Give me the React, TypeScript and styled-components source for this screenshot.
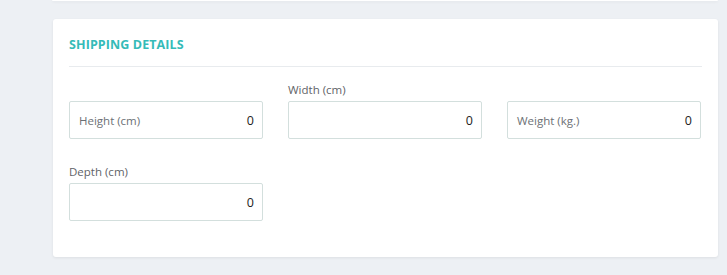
import React from "react";
import styled, { createGlobalStyle } from "styled-components";

const Global = createGlobalStyle`
  html, body { margin: 0; padding: 0; background: #edf0f4; }
  body { font-family: "Open Sans", "Liberation Sans", sans-serif; }
  * { box-sizing: border-box; }
`;

const Page = styled.div`
  display: flex;
  flex-direction: column;
  gap: 18px;
  padding: 0 9px 18px 53px;
  width: 727px;
`;

const TopCard = styled.div`
  height: 1px;
  background: #ffffff;
  border-radius: 0 0 3px 3px;
  box-shadow: 0 1px 3px rgba(0, 0, 0, 0.08);
  margin-left: -1px;
`;

const Card = styled.section`
  background: #ffffff;
  border-radius: 3px;
  box-shadow: 0 1px 3px rgba(0, 0, 0, 0.07);
  padding: 17px 16px 36px 16px;
`;

const Heading = styled.h2`
  margin: 0;
  font-size: 12.5px;
  line-height: 17px;
  font-weight: 700;
  color: #35bbb8;
  letter-spacing: 0.1px;
  text-transform: uppercase;
  padding-bottom: 13px;
  border-bottom: 1px solid #e8ebee;
`;

const Grid = styled.div`
  display: grid;
  grid-template-columns: repeat(3, 194px);
  column-gap: 25px;
  row-gap: 25px;
  margin-top: 15px;
  align-items: end;
`;

const Field = styled.div`
  display: flex;
  flex-direction: column;
  gap: 4px;
`;

const TopLabel = styled.label`
  font-size: 11.5px;
  line-height: 15px;
  color: #5f6368;
`;

const Box = styled.div`
  display: flex;
  align-items: center;
  height: 38px;
  border: 1px solid #d3dfdd;
  border-radius: 2px;
  background: #ffffff;
  padding: 0 8px 0 9px;
`;

const InnerLabel = styled.span`
  font-size: 11.5px;
  color: #6c7075;
  white-space: nowrap;
`;

const Value = styled.input`
  flex: 1;
  min-width: 0;
  border: none;
  outline: none;
  background: transparent;
  text-align: right;
  font-family: inherit;
  font-size: 12.5px;
  color: #222;
  padding: 0;
`;

type F = { label: string; inside?: boolean };

const fields: F[] = [
  { label: "Height (cm)", inside: true },
  { label: "Width (cm)" },
  { label: "Weight (kg.)", inside: true },
  { label: "Depth (cm)" },
];

export default function App() {
  return (
    <>
      <Global />
      <Page>
        <TopCard />
        <Card>
          <Heading>Shipping Details</Heading>
          <Grid>
            {fields.map((f) => (
              <Field key={f.label}>
                {!f.inside && <TopLabel>{f.label}</TopLabel>}
                <Box>
                  {f.inside && <InnerLabel>{f.label}</InnerLabel>}
                  <Value defaultValue="0" />
                </Box>
              </Field>
            ))}
          </Grid>
        </Card>
      </Page>
    </>
  );
}
